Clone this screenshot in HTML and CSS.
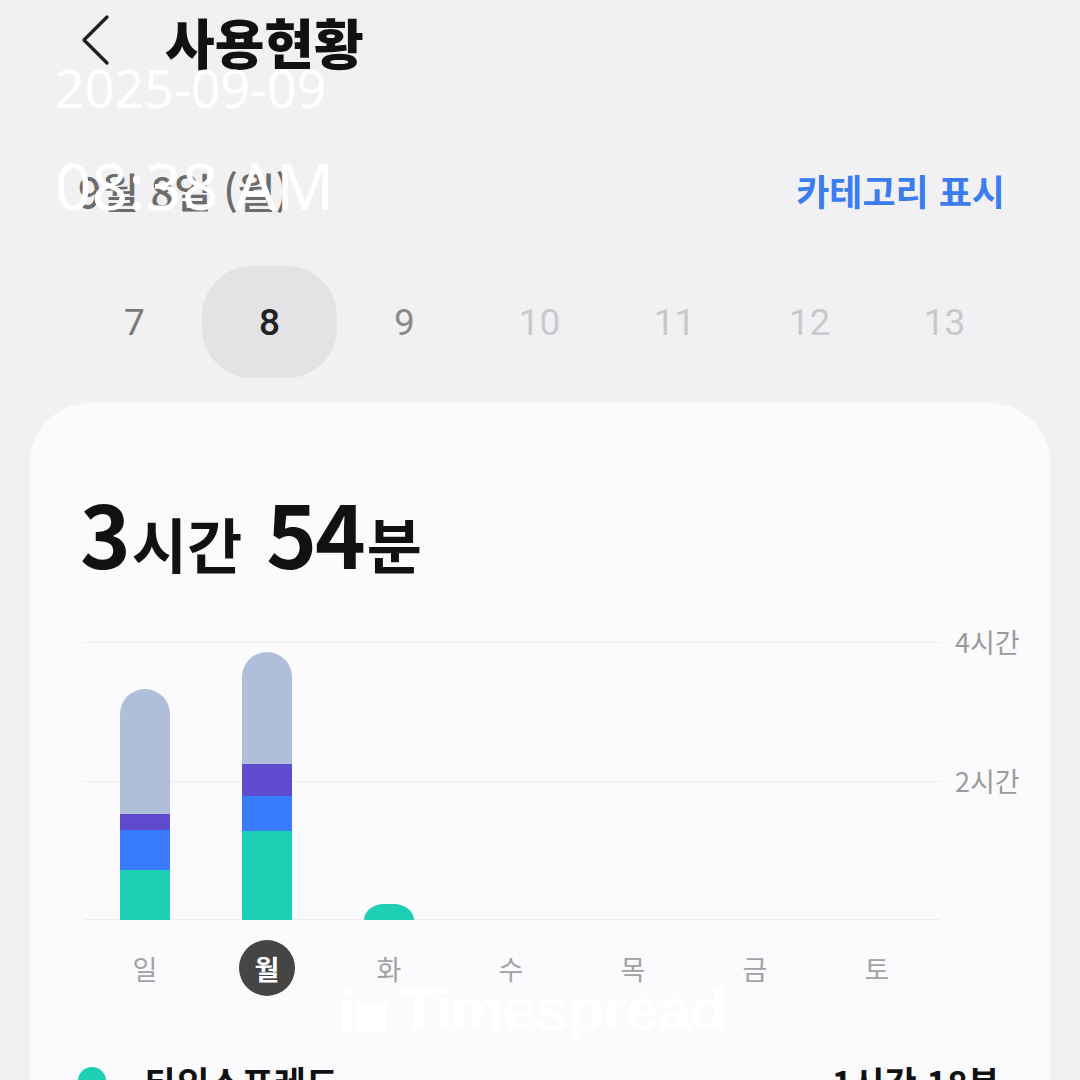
FILE: index.html
```html
<!DOCTYPE html>
<html lang="ko">
<head>
<meta charset="utf-8">
<title>사용현황</title>
<link rel="stylesheet" href="styles.css">
</head>
<body>
<div class="screen">
  <header class="header">
    <svg class="back" width="30" height="54" viewBox="0 0 30 54"><path d="M26 3 L3 26 L26 49" fill="none" stroke="#1e1e1e" stroke-width="3.2" stroke-linecap="round" stroke-linejoin="round"/></svg>
    <h1 class="title">사용현황</h1>
  </header>

  <div class="date-line">
    <span class="date">9월 8일 (월)</span>
    <span class="category">카테고리 표시</span>
  </div>

  <div class="strip">
    <div class="day">7</div>
    <div class="day selected">8</div>
    <div class="day near">9</div>
    <div class="day future">10</div>
    <div class="day future">11</div>
    <div class="day future">12</div>
    <div class="day future">13</div>
  </div>

  <section class="card">
    <div class="total"><span class="num">3</span><span class="unit">시간</span> <span class="num">54</span><span class="unit">분</span></div>

    <div class="chart">
      <div class="plot">
        <div class="lines">
          <div class="gl"></div>
          <div class="gl last"></div>
        </div>
        <div class="bars">
          <div class="col">
            <div class="bar">
              <div class="seg gray" style="height:125px"></div>
              <div class="seg purple" style="height:16px"></div>
              <div class="seg blue" style="height:40px"></div>
              <div class="seg teal" style="height:50px"></div>
            </div>
          </div>
          <div class="col">
            <div class="bar">
              <div class="seg gray" style="height:112px"></div>
              <div class="seg purple" style="height:32px"></div>
              <div class="seg blue" style="height:35px"></div>
              <div class="seg teal" style="height:89px"></div>
            </div>
          </div>
          <div class="col">
            <div class="bar small">
              <div class="seg teal" style="height:16px"></div>
            </div>
          </div>
          <div class="col"></div>
          <div class="col"></div>
          <div class="col"></div>
          <div class="col"></div>
        </div>
      </div>
      <div class="axis">
        <div class="tick">4시간</div>
        <div class="tick">2시간</div>
      </div>
    </div>

    <div class="weekdays">
      <div class="wd">일</div>
      <div class="wd"><span class="wd-active">월</span></div>
      <div class="wd">화</div>
      <div class="wd">수</div>
      <div class="wd">목</div>
      <div class="wd">금</div>
      <div class="wd">토</div>
    </div>

    <div class="legend-row">
      <span class="dot"></span>
      <span class="app">타임스프레드</span>
      <span class="time">1시간 18분</span>
    </div>

    <div class="watermark">
      <svg width="44" height="44" viewBox="0 0 44 44"><rect x="0" y="12" width="9" height="32" fill="#fff"/><rect x="0" y="0" width="9" height="8" fill="#fff"/><rect x="13" y="14" width="31" height="30" fill="#fff"/></svg>
      <span>Timespread</span>
    </div>
  </section>

  <div class="stamp">
    <div class="stamp-date">2025-09-09</div>
    <div class="stamp-time">08:38 AM</div>
  </div>
</div>
</body>
</html>
```

FILE: styles.css
```css
* { box-sizing: border-box; margin: 0; padding: 0; }
html, body {
  width: 1080px;
  height: 1080px;
  overflow: hidden;
  background: #f1f1f3;
}
body {
  font-family: "Noto Sans CJK KR", "Noto Sans", sans-serif;
  color: #111;
}
.screen {
  position: relative;
  width: 1080px;
  height: 1080px;
  overflow: hidden;
}

.header {
  height: 84px;
  display: flex;
  align-items: center;
  padding-left: 81px;
}
.back { display: block; margin-top: -2px; }
.title {
  margin-left: 54px;
  font-size: 54px;
  font-weight: 900;
  color: #111;
  line-height: 1;
}

.date-line {
  margin-top: 66px;
  height: 80px;
  display: flex;
  align-items: center;
  justify-content: space-between;
  padding: 0 75px 0 78px;
}
.date {
  font-size: 41px;
  font-weight: 500;
  color: #6c6c6c;
  white-space: nowrap;
}
.category {
  font-size: 36px;
  font-weight: 700;
  color: #3b7cee;
  white-space: nowrap;
}

.strip {
  margin-top: 36px;
  height: 112px;
  display: flex;
  padding-left: 67px;
}
.day {
  width: 135px;
  height: 112px;
  display: flex;
  align-items: center;
  justify-content: center;
  font-family: "Roboto", "Noto Sans", sans-serif;
  font-size: 37px;
  font-weight: 400;
  color: #7a7a7a;
}
.day.selected {
  background: #e3e3e5;
  border-radius: 50px;
  color: #222;
  font-weight: 500;
}
.day.near { color: #8a8a8a; }
.day.future { color: #c9c9cb; }

.card {
  position: relative;
  margin: 25px 30px 0 30px;
  height: 800px;
  background: #fbfbfd;
  border-radius: 60px 60px 0 0;
  padding: 84px 50px 0 54px;
}
.total {
  height: 90px;
  display: flex;
  align-items: baseline;
  margin-left: -4px;
  line-height: 90px;
  white-space: nowrap;
}
.total .num {
  font-size: 86px;
  font-weight: 700;
  letter-spacing: -2px;
}
.total .unit {
  font-size: 60px;
  font-weight: 700;
  margin-right: 24px;
  margin-left: 3px;
}

.chart {
  margin-top: 65px;
  display: flex;
}
.plot {
  flex: 0 0 856px;
  width: 856px;
  height: 278px;
  display: grid;
}
.lines, .bars { grid-area: 1 / 1; }
.lines { display: flex; flex-direction: column; }
.gl {
  height: 139px;
  border-top: 1.5px solid #ececef;
}
.gl.last { border-bottom: 1.5px solid #ececef; }
.bars {
  display: grid;
  grid-template-columns: repeat(7, 122px);
  align-items: end;
}
.col {
  height: 278px;
  display: flex;
  justify-content: center;
  align-items: flex-end;
}
.bar {
  width: 50px;
  display: flex;
  flex-direction: column;
  border-radius: 25px 25px 0 0;
  overflow: hidden;
}
.bar.small { border-radius: 20px 20px 0 0 / 16px 16px 0 0; }
.seg.gray { background: #b0bfd9; }
.seg.purple { background: #5f4bcd; }
.seg.blue { background: #387bfd; }
.seg.teal { background: #1ecfb6; }

.axis {
  flex: 0 0 auto;
  margin-left: 15px;
  margin-right: -40px;
  margin-top: -16px;
  display: flex;
  flex-direction: column;
}
.tick {
  height: 139px;
  font-size: 27px;
  line-height: 32px;
  color: #9a9a9c;
  white-space: nowrap;
}

.weekdays {
  height: 96px;
  display: grid;
  grid-template-columns: repeat(7, 122px);
  align-items: center;
}
.wd {
  display: flex;
  justify-content: center;
  font-size: 27px;
  color: #a2a2a4;
}
.wd-active {
  width: 56px;
  height: 56px;
  border-radius: 50%;
  background: #454545;
  color: #fff;
  font-weight: 700;
  display: flex;
  align-items: center;
  justify-content: center;
}

.legend-row {
  margin-top: 35px;
  margin-left: -6px;
  height: 60px;
  display: flex;
  align-items: center;
}
.dot {
  width: 28px;
  height: 28px;
  border-radius: 50%;
  background: #1ecfb6;
}
.app {
  margin-left: 39px;
  font-size: 35px;
  font-weight: 700;
}
.time {
  margin-left: auto;
  font-size: 35px;
  font-weight: 700;
}

.watermark {
  position: absolute;
  left: 312px;
  top: 572px;
  display: flex;
  align-items: center;
  gap: 14px;
  font-family: "Liberation Sans", "Noto Sans", sans-serif;
  font-size: 60px;
  font-weight: 700;
  color: #ffffff;
  letter-spacing: -1px;
}

.stamp {
  position: absolute;
  left: 55px;
  top: 59px;
  color: #ffffff;
  font-family: "Noto Sans", sans-serif;
  font-weight: 400;
}
.stamp-date {
  font-size: 52px;
  line-height: 58px;
}
.stamp-time {
  margin-top: 32px;
  font-size: 64px;
  line-height: 74px;
}
```
